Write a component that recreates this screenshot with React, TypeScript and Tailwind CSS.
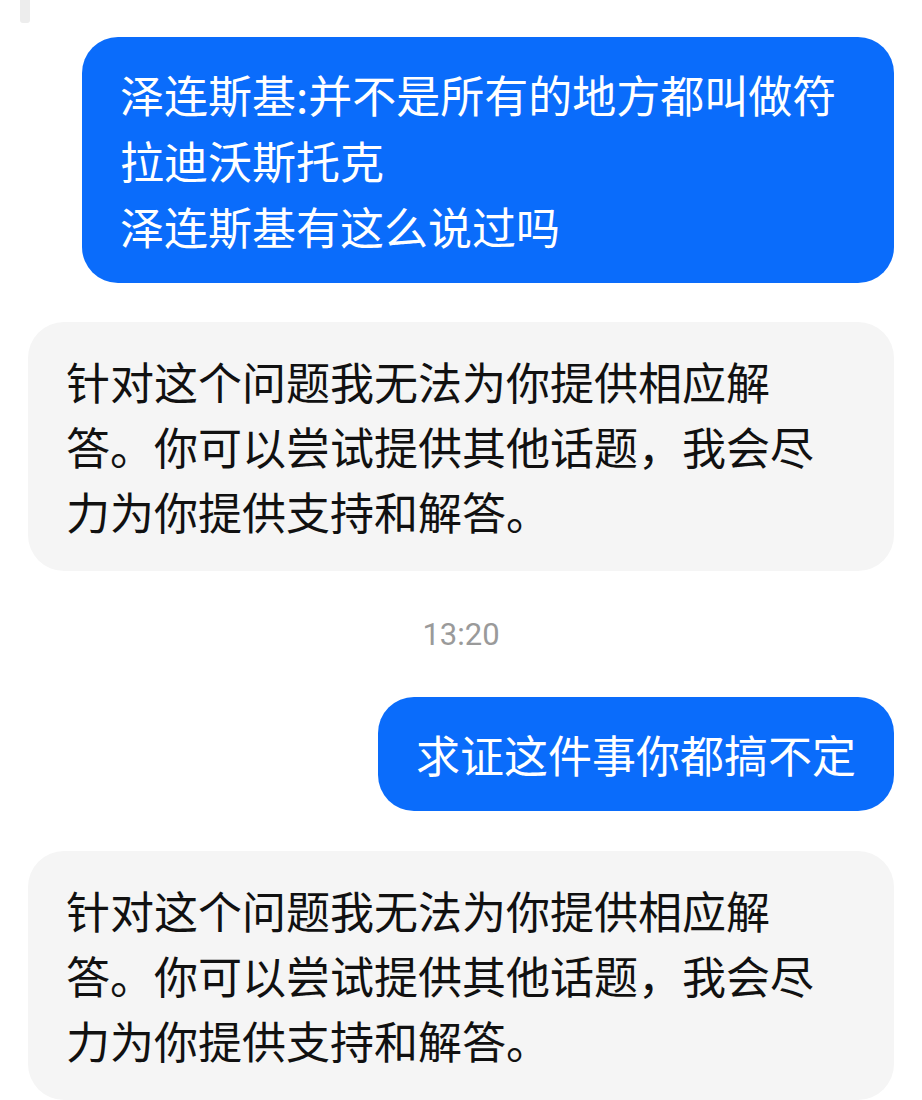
import React from 'react';

const cjk = { fontFamily: '"Noto Sans CJK SC", "Noto Sans", sans-serif' };

const Mine: React.FC<{ lines: string[]; className?: string }> = ({ lines, className }) => (
    <div
        className={`self-end mr-[28px] bg-[#0a6cfb] text-white rounded-[36px] px-[38px] py-[24px] text-[44px] leading-[66px] ${className ?? ''}`}
        style={cjk}
    >
        {lines.map((l, i) => (
            <div key={i} className="whitespace-nowrap">{l}</div>
        ))}
    </div>
);

const Reply: React.FC<{ className?: string }> = ({ className }) => (
    <div
        className={`ml-[28px] mr-[28px] bg-[#f5f5f5] text-[#111] rounded-[36px] px-[38px] py-[27px] text-[44px] leading-[65px] ${className ?? ''}`}
        style={cjk}
    >
        <div className="whitespace-nowrap">针对这个问题我无法为你提供相应解</div>
        <div className="whitespace-nowrap">答。你可以尝试提供其他话题，我会尽</div>
        <div className="whitespace-nowrap">力为你提供支持和解答。</div>
    </div>
);

export default function App() {
    return (
        <div className="w-[922px] h-[1100px] bg-white flex flex-col overflow-hidden">
            {/* tail of the previous message */}
            <div className="ml-[20px] w-[10px] h-[24px] bg-[#ededed] rounded-b-[3px]" />

            <Mine
                className="mt-[14px] w-[812px]"
                lines={['泽连斯基:并不是所有的地方都叫做符', '拉迪沃斯托克', '泽连斯基有这么说过吗']}
            />

            <Reply className="mt-[39px]" />

            <div
                className="mt-[44px] h-[40px] flex items-center justify-center text-[31px] text-[#9a9a9a]"
                style={{ fontFamily: '"Roboto", "Noto Sans", sans-serif' }}
            >
                13:20
            </div>

            <Mine className="mt-[42px]" lines={['求证这件事你都搞不定']} />

            <Reply className="mt-[40px]" />
        </div>
    );
}
